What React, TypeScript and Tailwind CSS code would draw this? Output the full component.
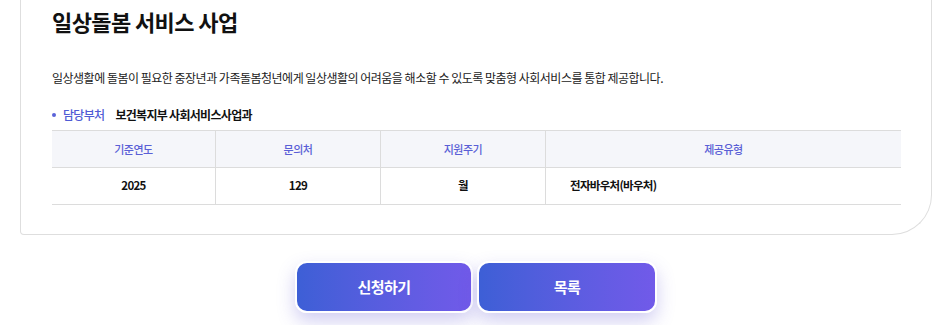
import React from "react";

const font = { fontFamily: '"Noto Sans CJK KR", "Noto Sans", sans-serif' };

export default function App() {
  const heads = ["기준연도", "문의처", "지원주기", "제공유형"];
  return (
    <div className="w-[939px] h-[325px] bg-white overflow-hidden" style={font}>
      <div className="ml-[20px] mr-[7px] h-[235px] border-x border-b border-[#dedede] rounded-bl-[4px] rounded-br-[40px] pl-[31px] pr-[30px] pt-[7px]">
        <h1 className="text-[22px] font-bold text-[#111] tracking-[-0.6px] leading-[28px]">일상돌봄 서비스 사업</h1>
        <p className="mt-[35px] text-[12px] text-[#222] tracking-[-0.5px] leading-[16px]">
          일상생활에 돌봄이 필요한 중장년과 가족돌봄청년에게 일상생활의 어려움을 해소할 수 있도록 맞춤형 사회서비스를 통합 제공합니다.
        </p>
        <div className="mt-[21px] flex items-center text-[12px] leading-[16px] tracking-[-0.7px]">
          <span className="w-[4px] h-[4px] rounded-full bg-[#5a63d8] ml-[0px] mr-[7px]" />
          <span className="text-[#4f5bd5] font-medium">담당부처</span>
          <span className="ml-[11px] text-[#111] font-semibold">보건복지부 사회서비스사업과</span>
        </div>
        <div className="mt-[7px] border-t border-[#dcdcdc]">
          <div className="grid grid-cols-[164px_165px_165px_1fr] bg-[#f5f6fa] border-b border-[#dcdcdc] h-[37px]">
            {heads.map((h, i) => (
              <div
                key={h}
                className={`flex items-center justify-center text-[11px] font-medium text-[#5a5fd6] tracking-[-0.5px] ${i < 3 ? "border-r border-[#dcdcdc]" : ""}`}
              >
                {h}
              </div>
            ))}
          </div>
          <div className="grid grid-cols-[164px_165px_165px_1fr] border-b border-[#dcdcdc] h-[37px] text-[11.5px] font-semibold text-[#111] tracking-[-0.7px]">
            <div className="flex items-center justify-center border-r border-[#dcdcdc]">2025</div>
            <div className="flex items-center justify-center border-r border-[#dcdcdc]">129</div>
            <div className="flex items-center justify-center border-r border-[#dcdcdc]">월</div>
            <div className="flex items-center pl-[24px]">전자바우처(바우처)</div>
          </div>
        </div>
      </div>
      <div className="mt-[26px] flex justify-center gap-[4px] pl-[13px]">
        <button className="w-[178px] h-[52px] rounded-[12px] border-2 border-white bg-gradient-to-r from-[#3d5fd6] to-[#715ae9] text-white text-[15px] font-bold tracking-[-0.5px] shadow-[0_8px_18px_rgba(90,80,210,0.28)]">
          신청하기
        </button>
        <button className="w-[180px] h-[52px] rounded-[12px] border-2 border-white bg-gradient-to-r from-[#3d5fd6] to-[#715ae9] text-white text-[15px] font-bold tracking-[-0.5px] shadow-[0_8px_18px_rgba(90,80,210,0.28)]">
          목록
        </button>
      </div>
    </div>
  );
}
